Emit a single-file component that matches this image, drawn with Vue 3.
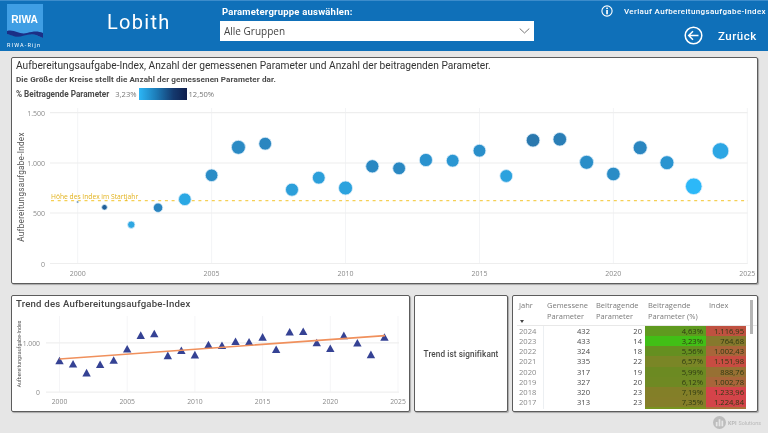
<script setup>
const sx = (y) => 77.7 + (y - 2000) * 26.784
const main = [
  [2000, 202, 1, '#20507f'], [2001, 207.3, 2.8, '#205f9a'], [2002, 224.7, 3.7, '#2ea7e2'], [2003, 207.7, 4.7, '#2a84bf'],
  [2004, 199.3, 6.3, '#2ba8e4'], [2005, 175.3, 6.3, '#2a8cc6'], [2006, 147.3, 7, '#2a8ac4'], [2007, 143.7, 6.4, '#2a86c0'],
  [2008, 189.7, 6.5, '#2c9fda'], [2009, 177.7, 6.4, '#2c9fda'], [2010, 188, 7, '#2ba2de'], [2011, 166.3, 6.6, '#2a88c2'],
  [2012, 168.3, 6.4, '#2a88c2'], [2013, 160, 6.6, '#2a92ce'], [2014, 160.7, 6.4, '#2a96d2'], [2015, 150.7, 6.4, '#2a8fca'],
  [2016, 176, 6.4, '#2ca2de'], [2017, 140.3, 6.8, '#2a78ae'], [2018, 139.3, 6.8, '#2a7eb6'], [2019, 162.3, 7, '#2a8ec8'],
  [2020, 174, 6.8, '#2a8cc6'], [2021, 147.7, 7, '#2a86c0'], [2022, 162.7, 7, '#2a94d0'], [2023, 186.3, 8.3, '#2cb8f8'],
  [2024, 151, 8.3, '#2ca6e4'],
].map(([year, cy, r, fill]) => ({ year, cx: sx(year), cy, r, fill }))
const yTicks = [['1.500', 112.7], ['1.000', 163], ['500', 213], ['0', 263.5]]
const xYears = [2000, 2005, 2010, 2015, 2020, 2025]

const tx = (y) => 59.5 + (y - 2000) * 13.54
const trendY = [641, 575, 393, 565, 650, 880, 1155, 1190, 745, 850, 760, 965, 950, 1030, 1020, 1120, 870, 1225, 1235, 1005, 890, 1150, 1002, 765, 1117]
const tri = trendY.map((v, i) => {
  const x = tx(2000 + i)
  const y = 392.2 - v * 0.0492
  return `${x - 4.2},${y + 3.6} ${x + 4.2},${y + 3.6} ${x},${y - 4}`
})

const rows = [
  ['2024', 432, 20, '4,63%', '1.116,95', '#5f9a1f', '#bf5140'],
  ['2023', 433, 14, '3,23%', '764,68', '#41bf16', '#86792d'],
  ['2022', 324, 18, '5,56%', '1.002,43', '#658f20', '#a8653a'],
  ['2021', 335, 22, '6,57%', '1.151,98', '#7a8626', '#c74c42'],
  ['2020', 317, 19, '5,99%', '888,76', '#6c8a22', '#977033'],
  ['2019', 327, 20, '6,12%', '1.002,78', '#6f8923', '#a8653a'],
  ['2018', 320, 23, '7,19%', '1.233,96', '#837f28', '#d5434a'],
  ['2017', 313, 23, '7,35%', '1.224,84', '#857e29', '#d34449'],
]
</script>

<template>
  <div class="page">
    <header class="head">
      <div class="logo">
        <svg class="logo-mark" width="36" height="35" viewBox="0 0 36 35">
          <path d="M0 0H36V34L29 31C22 28 14 33 8 32L0 30Z" fill="#3f9ee4" />
          <path d="M0 27C8 25 12 31 20 29C27 27 31 27 36 29V34L29 31C22 28 14 34 8 32.5L0 30Z" fill="#1b2f86" />
          <text x="17.5" y="18.5" text-anchor="middle" class="logo-word">RIWA</text>
        </svg>
        <span class="logo-sub">RIWA-Rijn</span>
      </div>
      <h1 class="city">Lobith</h1>
      <div class="picker">
        <label class="picker-label">Parametergruppe auswählen:</label>
        <div class="select">
          <span>Alle Gruppen</span>
          <svg width="11" height="6" viewBox="0 0 11 6"><path d="M.7 .5L5.5 5L10.3 .5" fill="none" stroke="#777" stroke-width="1" /></svg>
        </div>
      </div>
      <div class="side">
        <div class="side-top">
          <svg width="12" height="12" viewBox="0 0 12 12">
            <circle cx="6" cy="6" r="5.1" fill="none" stroke="#fff" stroke-width="1.1" />
            <rect x="5.2" y="5" width="1.7" height="4.3" fill="#fff" />
            <rect x="5.2" y="2.6" width="1.7" height="1.5" fill="#fff" />
          </svg>
          <span>Verlauf Aufbereitungsaufgabe-Index</span>
        </div>
        <div class="side-back">
          <svg width="19" height="19" viewBox="0 0 19 19">
            <circle cx="9.5" cy="9.5" r="8.3" fill="none" stroke="#fff" stroke-width="1.5" />
            <path d="M14.5 9.5H5M9 5.2L4.7 9.5L9 13.8" fill="none" stroke="#fff" stroke-width="1.5" />
          </svg>
          <span>Zurück</span>
        </div>
      </div>
    </header>

    <section class="panel main-panel">
      <h2 class="main-title">Aufbereitungsaufgabe-Index, Anzahl der gemessenen Parameter und Anzahl der beitragenden Parameter.</h2>
      <p class="main-sub">Die Größe der Kreise stellt die Anzahl der gemessenen Parameter dar.</p>
      <div class="legend">
        <b>% Beitragende Parameter</b>
        <span>3,23%</span>
        <i class="ramp"></i>
        <span>12,50%</span>
      </div>
      <svg class="plot main-plot" width="768" height="433" viewBox="0 0 768 433">
        <g v-for="y in xYears" :key="y">
          <line :x1="sx(y)" :x2="sx(y)" y1="108" y2="264" stroke="#f3f4f6" />
          <text :x="sx(y)" y="276" text-anchor="middle" class="tick">{{ y }}</text>
        </g>
        <g v-for="t in yTicks" :key="t[0]">
          <line x1="50" x2="747.5" :y1="t[1]" :y2="t[1]" stroke="#eeeeee" stroke-width="1.2" />
          <text x="45" :y="t[1] + 3" text-anchor="end" class="tick">{{ t[0] }}</text>
        </g>
        <text transform="translate(24 187) rotate(-90)" text-anchor="middle" class="axis">Aufbereitungsaufgabe-Index</text>
        <line x1="51" x2="748" y1="200.7" y2="200.7" stroke="#f5cf55" stroke-width="1.3" stroke-dasharray="3 3.7" />
        <text x="51" y="198.5" class="start">Höhe des Index im Startjahr</text>
        <circle v-for="c in main" :key="c.year" :cx="c.cx" :cy="c.cy" :r="c.r" :fill="c.fill" stroke="#dceefa" stroke-width="0.8" />
      </svg>
    </section>

    <div class="bottom">
      <section class="panel trend">
        <h3>Trend des Aufbereitungsaufgabe-Index</h3>
        <svg class="plot trend-plot" width="768" height="433" viewBox="0 0 768 433">
          <g v-for="y in xYears" :key="y">
            <line :x1="tx(y)" :x2="tx(y)" y1="316" y2="392" stroke="#f5f5f7" />
            <text :x="tx(y)" y="404" text-anchor="middle" class="tick small">{{ y }}</text>
          </g>
          <line x1="46" x2="399" y1="342.8" y2="342.8" stroke="#efefef" stroke-width="1.2" />
          <line x1="46" x2="399" y1="392.2" y2="392.2" stroke="#efefef" stroke-width="1.2" />
          <text x="40" y="346" text-anchor="end" class="tick small">1.000</text>
          <text x="40" y="395" text-anchor="end" class="tick small">0</text>
          <text transform="translate(20.5 354) rotate(-90)" text-anchor="middle" class="axis tiny">Aufbereitungsaufgabe-Index</text>
          <polygon v-for="(p, i) in tri" :key="i" :points="p" fill="#354294" />
          <line x1="59.5" x2="385" y1="359" y2="335.6" stroke="#f0905c" stroke-width="1.6" />
        </svg>
      </section>

      <section class="panel signif">Trend ist signifikant</section>

      <section class="panel table-panel">
        <div class="thead">
          <div class="th jahr">Jahr<i class="sort"></i></div>
          <div class="th">Gemessene<br />Parameter</div>
          <div class="th">Beitragende<br />Parameter</div>
          <div class="th">Beitragende<br />Parameter (%)</div>
          <div class="th">Index</div>
        </div>
        <div class="tbody">
          <div v-for="r in rows" :key="r[0]" class="tr">
            <span class="c-year">{{ r[0] }}</span>
            <span class="num">{{ r[1] }}</span>
            <span class="num">{{ r[2] }}</span>
            <span class="num heat" :style="{ background: r[5] }">{{ r[3] }}</span>
            <span class="num heat last" :style="{ background: r[6] }">{{ r[4] }}</span>
          </div>
          <div class="tr end">
            <span class="c-year"></span><span></span><span></span>
            <span class="end-a"></span><span class="end-b"></span>
          </div>
        </div>
        <i class="scroll"></i>
      </section>
    </div>

    <footer class="foot">
      <svg width="13" height="13" viewBox="0 0 12 12">
        <circle cx="6" cy="6" r="6" fill="#bdbdbd" />
        <rect x="2.6" y="5.5" width="1.6" height="4" fill="#e6e6e6" />
        <rect x="5.2" y="3" width="1.6" height="6.5" fill="#e6e6e6" />
        <rect x="7.8" y="4.3" width="1.6" height="5.2" fill="#e6e6e6" />
      </svg>
      <b>KPI</b> <span>Solutions</span>
    </footer>
  </div>
</template>

<style>
html, body { margin: 0; background: #e6e6e6; }
</style>

<style scoped>
.page {
  position: relative;
  width: 768px;
  height: 433px;
  overflow: hidden;
  background: #e6e6e6;
  font-family: Roboto, "Liberation Sans", sans-serif;
  color: #333;
  filter: blur(0.35px);
}
.head {
  display: flex;
  box-sizing: border-box;
  height: 51px;
  background: #0f70b9;
  border-top: 1px solid #3c8ccb;
  color: #fff;
}
.logo {
  width: 49px;
  margin-left: 7px;
  padding-top: 3px;
  display: flex;
  flex-direction: column;
  align-items: flex-start;
}
.logo-mark { display: block; }
.logo-word { font: 700 10.2px "Liberation Sans", sans-serif; fill: #fff; }
.logo-sub { font-size: 5.5px; letter-spacing: 1.15px; margin-top: 3px; white-space: nowrap; }
.city {
  margin: 9px 0 0 51px;
  width: 113px;
  font: 400 20px Roboto, sans-serif;
  letter-spacing: 1.3px;
}
.picker { width: 314px; padding-top: 4px; }
.picker-label { display: block; font-size: 9.5px; font-weight: 700; line-height: 13px; margin-left: 2px; letter-spacing: .2px; }
.select {
  display: flex;
  align-items: center;
  justify-content: space-between;
  box-sizing: border-box;
  height: 20px;
  margin-top: 3px;
  padding: 0 4px 0 4px;
  background: #fff;
  color: #444;
  font: 400 10px "Open Sans", sans-serif;
}
.side { flex: 1; padding-top: 3px; min-width: 0; }
.side-top {
  display: flex;
  align-items: center;
  margin-left: 67px;
  font-size: 8px;
  font-weight: 500;
  letter-spacing: .36px;
  white-space: nowrap;
  gap: 11px;
  height: 14px;
}
.side-back {
  display: flex;
  align-items: center;
  margin: 8px 0 0 150px;
  gap: 15px;
  font-size: 11.5px;
  font-weight: 500;
  letter-spacing: .5px;
}
.panel {
  position: relative;
  box-sizing: border-box;
  background: #fff;
  border: 1px solid #5c5c5c;
  border-radius: 2px;
  box-shadow: 1px 1px 1px #a8a8a8;
}
.main-panel {
  height: 227px;
  margin: 6px 10px 0 11px;
  padding: 1px 0 0 4px;
}
.main-title { margin: 0; font-size: 10.2px; font-weight: 400; line-height: 13px; letter-spacing: 0; white-space: nowrap; color: #333; }
.main-sub { margin: 2px 0 0; font-size: 8.1px; font-weight: 700; line-height: 11px; color: #4a4a4a; letter-spacing: .09px; }
.legend {
  display: flex;
  align-items: center;
  gap: 2px;
  margin-top: 3px;
  height: 12px;
  font-size: 7.6px;
  color: #777;
  font-family: "Open Sans", sans-serif;
}
.legend b { color: #4a4a4a; font-family: Roboto, sans-serif; margin-right: 4px; font-size: 8.2px; }
.ramp { width: 48px; height: 12px; background: linear-gradient(90deg, #2cb6f6, #1d7db9 35%, #14396e 72%, #0f1e4d); }
.plot { position: absolute; left: -12px; pointer-events: none; }
.main-plot { top: -58px; }
.tick { font: 400 7px "Open Sans", sans-serif; fill: #8a8a8a; }
.tick.small { font-size: 6.8px; }
.axis { font: 400 8.2px Roboto, sans-serif; fill: #555; letter-spacing: .25px; }
.axis.tiny { font-size: 5.1px; letter-spacing: .1px; }
.start { font: 400 6.7px "Open Sans", sans-serif; fill: #e2b21c; }
.bottom {
  display: flex;
  gap: 4px;
  height: 117px;
  margin: 11px 10px 0 11px;
}
.trend { width: 399px; }
.trend h3 { margin: 2px 0 0 4px; font-size: 9.6px; font-weight: 500; line-height: 12px; color: #444; letter-spacing: .2px; }
.trend-plot { top: -296px; }
.signif {
  width: 94px;
  display: flex;
  align-items: center;
  justify-content: center;
  font-size: 8.2px;
  font-weight: 500;
  letter-spacing: .1px;
  color: #4a4a4a;
}
.table-panel { flex: 1; min-width: 0; font-family: "Open Sans", sans-serif; font-size: 7.5px; color: #7a7a7a; }
.thead {
  display: grid;
  grid-template-columns: 28px 49px 52px 61px 40px;
  height: 29px;
  padding: 4px 0 0 6px;
  box-sizing: border-box;
  line-height: 10.5px;
}
.th { white-space: nowrap; }
.jahr { position: relative; }
.sort {
  position: absolute;
  left: 1px;
  top: 20px;
  border: 2.5px solid transparent;
  border-top: 3px solid #444;
  border-bottom: 0;
}
.tbody {
  margin-left: 4px;
  height: 83px;
  border-top: 1px solid #e8e8e8;
  box-sizing: border-box;
}
.tr {
  display: grid;
  grid-template-columns: 27px 49px 52px 61px 39.5px;
  height: 10.14px;
  line-height: 10.14px;
  font-size: 7.6px;
}
.tr.end { height: 1.5px; }
.end-a { background: #78941f; }
.end-b { background: #a8713a; }
.c-year { padding-left: 2px; border-right: 1px solid #eceff2; color: #8a8a8a; }
.num { text-align: right; color: #4a4a4a; padding-right: 3px; }
.heat { color: #2f3a12; padding-right: 3px; }
.heat.last { padding-right: 1.5px; }
.scroll {
  position: absolute;
  right: 4px;
  top: 4px;
  width: 3.5px;
  height: 34px;
  background: #b5b5b5;
}
.foot {
  position: absolute;
  right: 7px;
  bottom: 4px;
  display: flex;
  align-items: center;
  gap: 2px;
  font-size: 5.4px;
  color: #b8b8b8;
}
</style>
